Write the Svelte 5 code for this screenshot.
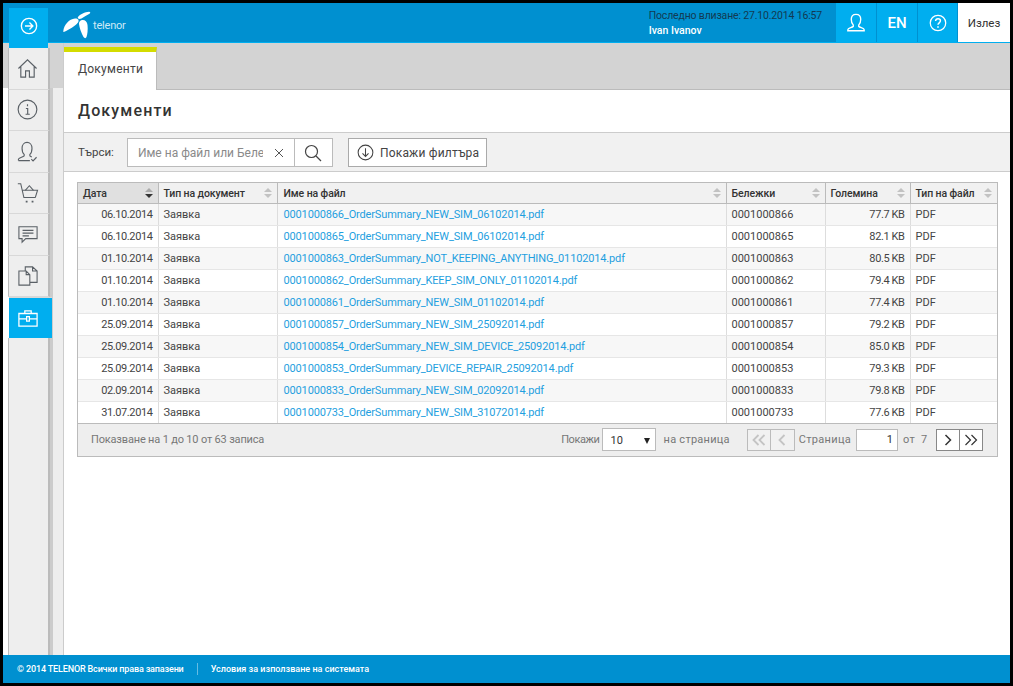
<script>
	const rows = [
		['06.10.2014', '0001000866_OrderSummary_NEW_SIM_06102014.pdf', '0001000866', '77.7 KB'],
		['06.10.2014', '0001000865_OrderSummary_NEW_SIM_06102014.pdf', '0001000865', '82.1 KB'],
		['01.10.2014', '0001000863_OrderSummary_NOT_KEEPING_ANYTHING_01102014.pdf', '0001000863', '80.5 KB'],
		['01.10.2014', '0001000862_OrderSummary_KEEP_SIM_ONLY_01102014.pdf', '0001000862', '79.4 KB'],
		['01.10.2014', '0001000861_OrderSummary_NEW_SIM_01102014.pdf', '0001000861', '77.4 KB'],
		['25.09.2014', '0001000857_OrderSummary_NEW_SIM_25092014.pdf', '0001000857', '79.2 KB'],
		['25.09.2014', '0001000854_OrderSummary_NEW_SIM_DEVICE_25092014.pdf', '0001000854', '85.0 KB'],
		['25.09.2014', '0001000853_OrderSummary_DEVICE_REPAIR_25092014.pdf', '0001000853', '79.3 KB'],
		['02.09.2014', '0001000833_OrderSummary_NEW_SIM_02092014.pdf', '0001000833', '79.8 KB'],
		['31.07.2014', '0001000733_OrderSummary_NEW_SIM_31072014.pdf', '0001000733', '77.6 KB']
	];

	const columns = [
		{ label: 'Дата', width: 80, sorted: true },
		{ label: 'Тип на документ', width: 119 },
		{ label: 'Име на файл', width: 449 },
		{ label: 'Бележки', width: 99 },
		{ label: 'Големина', width: 85 },
		{ label: 'Тип на файл', width: 87 }
	];
</script>

<div class="shell">
	<header class="topbar">
		<div class="brand">
			<svg class="logo" viewBox="0 0 28 28" width="28" height="28" aria-hidden="true">
				<path fill="#fff" d="M.3 20C1 14 6 8 12 7.500 15 7.300 16.500 9 15 11.500 12 15.500 6 18.500 2 20.500 .8 21.200 0 21 .3 20z" />
				<path fill="#fff" d="M15 6C17 3.500 22 1 26 .8 27.500 .8 27.700 2 26.500 2.800 24 4.300 21 6 18.500 7.500 16 8.500 14 7.500 15 6z" />
				<path fill="#fff" d="M19 9C21.500 8.500 24 10 24.500 14 25 18 24.500 23 23.500 26 23 27.500 21.500 27.500 20.500 26 18.500 22.500 16.500 17 16 13 15.800 11 17 9.500 19 9z" />
			</svg>
			<span class="wordmark">telenor</span>
		</div>
		<div class="login">
			<div class="last">Последно влизане: 27.10.2014 16:57</div>
			<div class="name">Ivan Ivanov</div>
		</div>
		<nav class="tools">
			<button class="tool" aria-label="Профил">
				<svg viewBox="0 0 22 22" width="20" height="20" fill="none" stroke="#fff" stroke-width="1.500">
					<path d="M2 19.500v-1.200c0-1.500 4.500-2.300 6-3.600v-1.500C6.500 12 5.800 9.500 5.800 7c0-3.500 2-5.500 5.200-5.500s5.200 2 5.200 5.500c0 2.500-.7 5-2.200 6.200v1.500c1.500 1.300 6 2.100 6 3.600v1.200z" />
				</svg>
			</button>
			<button class="tool lang">EN</button>
			<button class="tool narrow" aria-label="Помощ">
				<svg viewBox="0 0 20 20" width="18" height="18" fill="none" stroke="#fff" stroke-width="1.400">
					<circle cx="10" cy="10" r="8.600" />
					<path d="M7.300 7.800C7.400 6.200 8.500 5.300 10 5.300s2.700.9 2.700 2.300c0 2.200-2.700 2.200-2.700 4.400" stroke-width="1.600" />
					<path d="M10 13.500v1.700" stroke-width="1.800" />
				</svg>
			</button>
			<button class="logout">Излез</button>
		</nav>
	</header>

	<div class="middle">
		<aside class="side">
			<div class="rail">
				<button class="toggle" aria-label="Отвори менюто">
					<svg viewBox="0 0 20 20" width="18" height="18" fill="none" stroke="#fff" stroke-width="1.500">
						<circle cx="10" cy="10" r="8.500" />
						<path d="M5.500 10h8.500M10.500 6.200 14.300 10l-3.800 3.800" />
					</svg>
				</button>
				<a class="item" href="#home" aria-label="Начало">
					<svg viewBox="0 0 22 22" width="21" height="21" fill="none" stroke="#5a6066" stroke-width="1.200">
						<path d="M1.500 11 11 1.800 20.500 11M4 8.800V20h5v-6.500h4V20h5V8.800" />
					</svg>
				</a>
				<a class="item" href="#info" aria-label="Информация">
					<svg viewBox="0 0 22 22" width="21" height="21" fill="none" stroke="#5a6066" stroke-width="1.200">
						<circle cx="11" cy="11" r="9.800" />
						<path d="M11 5.500v2M9.300 10H11.200V15.800M9 16h4.400" />
					</svg>
				</a>
				<a class="item" href="#user" aria-label="Потребител">
					<svg viewBox="0 0 22 22" width="21" height="21" fill="none" stroke="#5a6066" stroke-width="1.200">
						<path d="M1.500 20.500v-1.300c0-1.500 4.500-2.300 6-3.600V14C6 12.800 5.300 10 5.300 7.500 5.300 4 7.500 1.500 10.500 1.500s5.200 2.500 5.200 6c0 2.500-.7 5.300-2.200 6.500v1.600c.6.500 1.300.9 2 1.200M1.500 20.500h12M15 19l1.800 1.800L20.500 17" />
					</svg>
				</a>
				<a class="item" href="#cart" aria-label="Количка">
					<svg viewBox="0 0 24 22" width="22" height="20" fill="none" stroke="#5a6066" stroke-width="1.200">
						<path d="M.8 .8H4l3.500 15.200h12.500M5.500 8h17l-2.500 8" />
						<path d="M9 8l4.500-5 4.500 5" />
						<path d="M9.500 20.500h2M16 20.500h2" stroke-width="2" />
					</svg>
				</a>
				<a class="item" href="#chat" aria-label="Съобщения">
					<svg viewBox="0 0 22 20" width="20" height="19" fill="none" stroke="#5a6066" stroke-width="1.200">
						<path d="M1 1.500h20v13H8.500L4.500 18.500v-4H1zM5 5.500h12M5 8.500h12M5 11.500h7" />
					</svg>
				</a>
				<a class="item" href="#docs" aria-label="Файлове">
					<svg viewBox="0 0 22 22" width="20" height="20" fill="none" stroke="#5a6066" stroke-width="1.200">
						<path d="M1 5.500h8l4 4V21H1zM9 5.500v4h4M8 5V1h8l5 4.500V18h-8M16 1v4.500h5" />
					</svg>
				</a>
				<a class="item active" href="#work" aria-label="Документи">
					<svg viewBox="0 0 22 20" width="20" height="19" fill="none" stroke="#fff" stroke-width="1.400">
						<path d="M1 4.500h20v14H1zM7.500 4.500V1.500h7v3M1 10.500h8M13 10.500h8" />
						<path d="M9.500 8h3v5h-3z" />
					</svg>
				</a>
			</div>
		</aside>

		<main class="main">
			<div class="tabstrip">
				<div class="tab">Документи</div>
			</div>
			<h1 class="title">Документи</h1>
			<div class="searchbar">
				<label class="search-label" for="q">Търси:</label>
				<div class="search">
					<div class="search-field">
						<input id="q" placeholder="Име на файл или Бележки" />
						<svg viewBox="0 0 10 10" width="10" height="10" fill="none" stroke="#555" stroke-width="1">
							<path d="M1 1l8 8M9 1l-8 8" />
						</svg>
					</div>
					<button class="search-go" aria-label="Търси">
						<svg viewBox="0 0 18 18" width="18" height="18" fill="none" stroke="#444" stroke-width="1.200">
							<circle cx="7.500" cy="7.500" r="6" />
							<path d="M12 12l5 5" />
						</svg>
					</button>
				</div>
				<button class="filters">
					<svg viewBox="0 0 18 18" width="17" height="17" fill="none" stroke="#444" stroke-width="1.100">
						<circle cx="9" cy="9" r="7.800" />
						<path d="M9 4.500v8.500M5.800 10 9 13.200 12.200 10" />
					</svg>
					Покажи филтъра
				</button>
			</div>

			<div class="grid">
				<table>
					<colgroup>
						{#each columns as col}
							<col style="width: {col.width}px" />
						{/each}
					</colgroup>
					<thead>
						<tr>
							{#each columns as col}
								<th class:sorted={col.sorted}>
									<span class="th-in">
										{col.label}
										<span class="sort" class:desc={col.sorted}><i></i><i></i></span>
									</span>
								</th>
							{/each}
						</tr>
					</thead>
					<tbody>
						{#each rows as row}
							<tr>
								<td class="right tight">{row[0]}</td>
								<td>Заявка</td>
								<td class="file"><a href="#file">{row[1]}</a></td>
								<td>{row[2]}</td>
								<td class="right tight">{row[3]}</td>
								<td>PDF</td>
							</tr>
						{/each}
					</tbody>
				</table>
				<div class="pager">
					<span class="count">Показване на 1 до 10 от 63 записа</span>
					<span class="show">Покажи</span>
					<div class="select"><span>10</span><b></b></div>
					<span class="per">на страница</span>
					<div class="btns off">
						<button aria-label="Първа">
							<svg viewBox="0 0 14 12" width="14" height="12" fill="none" stroke="#c4c4c4" stroke-width="1.800">
								<path d="M6.500 1 1.500 6l5 5M12.500 1l-5 5 5 5" />
							</svg>
						</button>
						<button aria-label="Предишна">
							<svg viewBox="0 0 8 12" width="8" height="12" fill="none" stroke="#c4c4c4" stroke-width="1.800">
								<path d="M6.500 1 1.500 6l5 5" />
							</svg>
						</button>
					</div>
					<span class="page-word">Страница</span>
					<div class="page-input">1</div>
					<span class="of">от&nbsp; 7</span>
					<div class="btns on">
						<button aria-label="Следваща">
							<svg viewBox="0 0 8 12" width="8" height="12" fill="none" stroke="#333" stroke-width="1.500">
								<path d="M1.500 1l5 5-5 5" />
							</svg>
						</button>
						<button aria-label="Последна">
							<svg viewBox="0 0 14 12" width="14" height="12" fill="none" stroke="#333" stroke-width="1.200">
								<path d="M1.500 1l5 5-5 5M7.500 1l5 5-5 5" />
							</svg>
						</button>
					</div>
				</div>
			</div>
		</main>
	</div>

	<footer class="foot">
		<span class="copy">© 2014 TELENOR Всички права запазени</span>
		<i class="sep"></i>
		<span class="terms">Условия за използване на системата</span>
	</footer>
</div>

<style>
	:global(body) {
		margin: 0;
		background: #000;
	}

	.shell {
		box-sizing: border-box;
		height: 100vh;
		border: 3px solid #000;
		display: flex;
		flex-direction: column;
		font-family: Roboto, 'Liberation Sans', sans-serif;
		font-size: 11px;
		color: #333;
		background: #fff;
		overflow: hidden;
	}

	button {
		font-family: inherit;
		padding: 0;
		border: 0;
		background: none;
		color: inherit;
	}

	/* top bar */
	.topbar {
		flex: none;
		height: 40px;
		box-sizing: border-box;
		display: flex;
		align-items: stretch;
		background: #0090d0;
		border-bottom: 1px solid #00aeef;
	}

	.brand {
		display: flex;
		align-items: flex-start;
		gap: 2px;
		margin-left: 60px;
		padding-top: 8px;
		position: relative;
		z-index: 1;
	}

	.logo {
		display: block;
	}

	.wordmark {
		color: #cde9f6;
		font-size: 11px;
		line-height: 14px;
		margin-top: 8px;
		letter-spacing: -0.2px;
	}

	.login {
		margin-left: auto;
		margin-right: 14px;
		padding-top: 5px;
		font-size: 10.500px;
		line-height: 15px;
	}

	.last {
		color: #123a52;
		letter-spacing: -0.17px;
	}

	.name {
		color: #fff;
		font-weight: 500;
	}

	.tools {
		display: flex;
		gap: 1px;
	}

	.tool {
		width: 40px;
		background: #00aeef;
		display: flex;
		align-items: center;
		justify-content: center;
	}

	.tool.narrow {
		width: 39px;
	}

	.lang {
		color: #fff;
		font-size: 15px;
		font-weight: 500;
	}

	.logout {
		width: 52px;
		background: #fff;
		color: #333;
		font-size: 11.500px;
	}

	/* sidebar */
	.middle {
		flex: 1;
		display: flex;
		min-height: 0;
	}

	.side {
		flex: none;
		width: 60px;
		box-sizing: border-box;
		background:
			linear-gradient(#d3d3d3 45px, transparent 45px),
			linear-gradient(90deg, #fff 5px, transparent 5px, transparent 47px, #ccc 47px, #ccc 50px, #eee 50px);
	}

	.rail {
		position: relative;
		z-index: 2;
		box-sizing: border-box;
		width: 42px;
		height: calc(100% + 35px);
		margin: -35px 0 0 5px;
		display: flex;
		flex-direction: column;
	}

	.toggle {
		flex: none;
		height: 40px;
		width: 39px;
		margin-left: 1px;
		padding-bottom: 4px;
		background: #00aeef;
		display: flex;
		align-items: center;
		justify-content: center;
	}

	.item {
		flex: none;
		height: 41.5px;
		box-sizing: border-box;
		display: flex;
		align-items: center;
		justify-content: center;
		padding-right: 2px;
		background: #eee;
		border-left: 1px solid #bbb;
		border-right: 2px solid #bbb;
		border-bottom: 1px solid #d8d8d8;
	}

	.item.active {
		height: 40px;
		width: 43px;
		background: #00aeef;
		border: 0;
		margin: 1px 0 0 1px;
		padding-right: 6px;
		box-sizing: border-box;
		box-shadow: 0 1px 0 #ccc, 0 -1px 0 #d8d8d8;
	}

	.rail::after {
		content: '';
		flex: 1;
		background: #eee;
		border-left: 1px solid #bbb;
		border-right: 2px solid #bbb;
	}

	/* main column */
	.main {
		flex: 1;
		min-width: 0;
		border-left: 1px solid #ccc;
	}

	.tabstrip {
		height: 47px;
		box-sizing: border-box;
		padding-top: 4px;
		background: #d3d3d3;
		border-bottom: 1px solid #bbb;
	}

	.tab {
		width: 93px;
		height: 43px;
		box-sizing: border-box;
		background: #fff;
		border-top: 5px solid #d4dc00;
		border-right: 1px solid #bbb;
		padding: 10px 0 0 14px;
		font-size: 12px;
		line-height: 15px;
		color: #444;
		letter-spacing: 0.25px;
	}

	.title {
		margin: 0;
		height: 42px;
		box-sizing: border-box;
		padding: 11px 0 0 14px;
		font-size: 16px;
		line-height: 20px;
		font-weight: 500;
		color: #333;
		letter-spacing: 1.150px;
	}

	.searchbar {
		height: 40px;
		box-sizing: border-box;
		display: flex;
		align-items: flex-start;
		padding: 5px 0 0 14px;
		background: #f1f1f1;
		border-top: 1px solid #ccc;
		border-bottom: 1px solid #ccc;
	}

	.search-label {
		margin: 7px 13px 0 0;
		font-size: 11.500px;
		line-height: 14px;
		color: #444;
	}

	.search {
		display: flex;
		width: 206px;
		height: 29px;
		box-sizing: border-box;
		border: 1px solid #bbb;
		background: #fff;
	}

	.search-field {
		flex: 1;
		min-width: 0;
		display: flex;
		align-items: center;
		padding: 0 10px 0 10px;
		gap: 11px;
	}

	.search-field input {
		flex: 1;
		min-width: 0;
		border: 0;
		padding: 0;
		outline: 0;
		font-family: inherit;
		font-size: 12px;
		background: none;
	}

	.search-field input::placeholder {
		color: #8a8a8a;
		opacity: 1;
	}

	.search-go {
		flex: none;
		width: 38px;
		border-left: 1px solid #bbb;
		display: flex;
		align-items: center;
		justify-content: center;
	}

	.filters {
		margin-left: 15px;
		width: 139px;
		height: 29px;
		box-sizing: border-box;
		border: 1px solid #aaa;
		background: #fff;
		display: flex;
		align-items: center;
		gap: 6px;
		padding-left: 8px;
		font-size: 12px;
		letter-spacing: 0.2px;
		color: #444;
	}

	/* documents grid */
	.grid {
		margin: 10px 12px 0 13px;
		border: 1px solid #bbb;
		background: #eee;
	}

	table {
		width: 919px;
		table-layout: fixed;
		border-collapse: collapse;
		background: #fff;
	}

	th {
		height: 20px;
		padding: 0;
		background: #f1f1f1;
		border-right: 1px solid #bbb;
		border-bottom: 1px solid #bbb;
		text-align: left;
		font-weight: 500;
		font-size: 10.500px;
		letter-spacing: -0.1px;
		color: #333;
	}

	th:last-child,
	td:last-child {
		border-right: 0;
	}

	th.sorted {
		background: #e0e0e0;
	}

	th:nth-child(3) .th-in {
		padding-left: 6px;
	}

	.th-in {
		display: flex;
		align-items: center;
		justify-content: space-between;
		padding: 0 5px;
	}

	.sort {
		display: flex;
		flex-direction: column;
		gap: 2px;
	}

	.sort i {
		display: block;
		width: 0;
		height: 0;
		border-left: 4px solid transparent;
		border-right: 4px solid transparent;
	}

	.sort i:first-child {
		border-bottom: 4px solid #c2c2c2;
	}

	.sort i:last-child {
		border-top: 4px solid #c2c2c2;
	}

	.sort.desc i:first-child {
		border-bottom-color: #aaa;
	}

	.sort.desc i:last-child {
		border-top-color: #333;
	}

	td {
		height: 21px;
		padding: 0 5px;
		border-right: 1px solid #ddd;
		border-bottom: 1px solid #e6e6e6;
		color: #444;
		white-space: nowrap;
		overflow: hidden;
	}

	td.file {
		padding-left: 6px;
	}

	tbody tr:nth-child(odd) td {
		background: #f7f7f7;
	}

	td.right {
		text-align: right;
	}

	td.tight {
		letter-spacing: -0.4px;
	}

	td a {
		color: #1f9fe0;
		text-decoration: none;
		letter-spacing: -0.15px;
	}

	tbody tr:last-child td {
		border-bottom: 1px solid #bbb;
	}

	.pager {
		height: 32px;
		box-sizing: border-box;
		display: flex;
		align-items: center;
		padding: 0 14px 1px 13px;
		color: #777;
		font-size: 11px;
	}

	.count {
		margin-right: auto;
		letter-spacing: -0.17px;
	}

	.show {
		letter-spacing: -0.4px;
	}

	.select {
		width: 54px;
		height: 23px;
		box-sizing: border-box;
		margin: 0 8px 0 2px;
		display: flex;
		align-items: center;
		justify-content: space-between;
		padding: 2px 5px 0 8px;
		background: #fff;
		border: 1px solid #bbb;
		color: #333;
		font-size: 11px;
	}

	.select b {
		width: 0;
		height: 0;
		border-left: 3.500px solid transparent;
		border-right: 3.500px solid transparent;
		border-top: 6px solid #222;
	}

	.per {
		margin-right: 17px;
		letter-spacing: 0.25px;
	}

	.btns {
		display: flex;
		height: 22px;
		box-sizing: border-box;
	}

	.btns button {
		width: 24px;
		height: 22px;
		box-sizing: border-box;
		display: flex;
		align-items: center;
		justify-content: center;
		border: 1px solid #bbb;
		background: #f1f1f1;
	}

	.btns button + button {
		border-left: 0;
	}

	.btns.on button + button {
		width: 23px;
	}

	.btns.on button {
		background: #fff;
		border-color: #888;
	}

	.page-word {
		margin-left: 4px;
		letter-spacing: 0.3px;
	}

	.page-input {
		width: 42px;
		height: 22px;
		box-sizing: border-box;
		margin: 0 5px;
		padding-right: 4px;
		background: #fff;
		border: 1px solid #bbb;
		color: #333;
		line-height: 20px;
		text-align: right;
	}

	.of {
		margin-right: 7px;
		min-width: 26px;
		letter-spacing: 0.3px;
	}

	/* footer */
	.foot {
		flex: none;
		height: 28px;
		box-sizing: border-box;
		display: flex;
		align-items: center;
		gap: 13px;
		padding: 0 0 0 14px;
		background: #0090d0;
		color: #fff;
		font-size: 9px;
		font-weight: 500;
	}

	.copy {
		letter-spacing: -0.15px;
	}

	.terms {
		letter-spacing: 0.02px;
	}

	.sep {
		width: 1px;
		height: 12px;
		background: #66bce3;
	}
</style>
